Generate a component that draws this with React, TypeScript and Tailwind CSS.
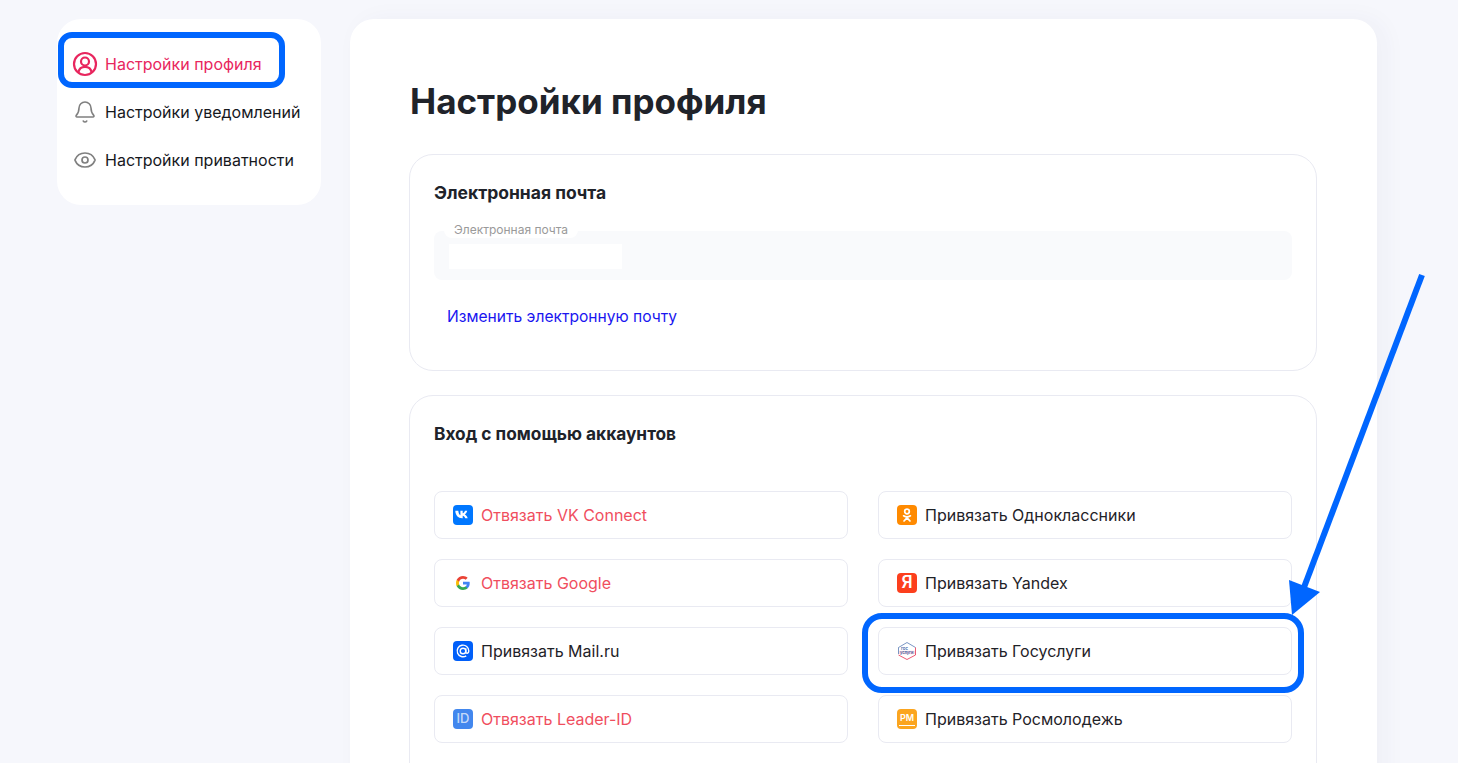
import { Bell, Eye } from 'lucide-react';
import type { ReactNode } from 'react';

const font = 'font-["Inter","Noto_Sans",sans-serif]';

function ProfileIcon() {
  return (
    <svg width="26" height="26" viewBox="0 0 26 26" fill="none" stroke="#e8265e" strokeWidth="2.2">
      <circle cx="13" cy="13" r="11" />
      <circle cx="13" cy="10.5" r="4" />
      <path d="M6.500 21c.6-3.400 3-5.200 6.500-5.200s5.900 1.800 6.500 5.200" />
    </svg>
  );
}

function VkIcon() {
  return (
    <svg width="20" height="20" viewBox="0 0 20 20">
      <rect width="20" height="20" rx="4" fill="#0077ff" />
      <path d="M2.800 5.800h2.500c.2 2.800 1.200 4.200 2.100 4.500V5.800h2.300v2.500c.9-.1 1.800-1.200 2.200-2.500h2.300c-.4 1.700-1.400 3-2.400 3.600 1 .5 2.300 1.600 2.900 3.800h-2.500c-.5-1.400-1.400-2.400-2.500-2.500v2.500h-.5c-4.200 0-6.700-2.800-6.900-7.400z" fill="#fff" />
    </svg>
  );
}

function GoogleIcon() {
  return (
    <svg width="20" height="20" viewBox="0 0 24 24">
      <g transform="translate(3.6 3.6) scale(0.7)">
        <path d="M23.500 12.300c0-.8-.1-1.600-.2-2.300H12v4.500h6.500c-.3 1.500-1.100 2.800-2.400 3.600v3h3.800c2.300-2.100 3.600-5.200 3.600-8.800z" fill="#4285f4" />
        <path d="M12 24c3.200 0 6-1.100 7.900-2.900l-3.800-3c-1.100.7-2.400 1.200-4.100 1.200-3.100 0-5.800-2.100-6.700-5H1.300v3.100C3.300 21.300 7.300 24 12 24z" fill="#34a853" />
        <path d="M5.300 14.300c-.5-1.500-.5-3.100 0-4.600V6.600H1.300c-1.700 3.300-1.700 7.400 0 10.800l4-3.100z" fill="#fbbc05" />
        <path d="M12 4.800c1.800 0 3.300.6 4.600 1.800l3.400-3.400C17.900 1.200 15.200 0 12 0 7.300 0 3.300 2.700 1.300 6.600l4 3.100c.9-2.800 3.600-4.900 6.700-4.900z" fill="#ea4335" />
      </g>
    </svg>
  );
}

function MailIcon() {
  return (
    <svg width="20" height="20" viewBox="0 0 20 20" fill="none">
      <rect width="20" height="20" rx="4" fill="#005ff9" />
      <circle cx="10" cy="10" r="2.8" stroke="#fff" strokeWidth="1.4" />
      <path d="M12.800 7.200v3.600c0 2.200 3 2 3-.8a5.800 5.800 0 1 0-2.600 4.800" stroke="#fff" strokeWidth="1.4" />
    </svg>
  );
}

function LeaderIcon() {
  return (
    <span className="flex h-5 w-5 items-center justify-center rounded bg-[#4287ee] text-[13px] font-medium text-white/70">ID</span>
  );
}

function OkIcon() {
  return (
    <svg width="20" height="20" viewBox="0 0 20 20" fill="none">
      <rect width="20" height="20" rx="4" fill="#ff8a00" />
      <circle cx="10" cy="6.5" r="2.3" stroke="#fff" strokeWidth="1.7" />
      <path d="M6.600 10.800c2.100 1.400 4.700 1.400 6.800 0M10 12v1M7 16l3-3.200 3 3.200" stroke="#fff" strokeWidth="1.7" strokeLinecap="round" />
    </svg>
  );
}

function YandexIcon() {
  return (
    <span className="flex h-5 w-5 items-center justify-center rounded bg-[#fc3f1d] text-[17px] font-semibold text-white">Я</span>
  );
}

function GosIcon() {
  return (
    <svg width="20" height="20" viewBox="0 0 20 20" fill="none">
      <path d="M1.500 13V6.500L10 1.500l8.500 5" stroke="#1e4f9c" strokeWidth="0.6" />
      <path d="M18.500 6.500V14L10 18.500 1.500 14" stroke="#e6304f" strokeWidth="0.8" />
      <rect x="2" y="9.8" width="16" height="3.4" fill="#fbdbe1" />
      <text x="4" y="8.6" fontSize="4.4" fontWeight="500" fill="#1e4f9c">гос</text>
      <text x="3" y="12.600" fontSize="4" fontWeight="500" fill="#1e4f9c">услуги</text>
    </svg>
  );
}

function RmIcon() {
  return (
    <span className="flex h-5 w-5 flex-col items-center justify-center rounded bg-[#fba51f] text-[9px] leading-[10px] font-semibold text-white">
      РМ
      <span className="mt-[2px] h-[1px] w-4 bg-white" />
    </span>
  );
}

function AccountButton({ icon, label, red }: { icon: ReactNode; label: string; red?: boolean }) {
  return (
    <div className="flex h-12 items-center gap-2 rounded-lg border border-[#e9eaf2] bg-white pl-[18px] text-base">
      <span className="flex h-5 w-5 shrink-0 items-center justify-center">{icon}</span>
      <span className={red ? 'text-[#f04e5e]' : 'text-[#1f2228]'}>{label}</span>
    </div>
  );
}

export default function App() {
  return (
    <div className={`${font} relative h-[763px] w-[1458px] overflow-hidden bg-[#f6f7fc] pl-[57px] pt-[19px]`}>
      <div className="flex items-start gap-[29px]">
        {/* sidebar */}
        <nav className="flex h-[186px] w-[264px] flex-col rounded-3xl bg-white pl-[15px] pt-[21px] text-base">
          <a className="flex h-12 items-center gap-[7px] text-[#e8265e]">
            <ProfileIcon />
            Настройки профиля
          </a>
          <a className="flex h-12 items-center gap-[8px] pl-[1px] text-[#16181d]">
            <Bell size={24} strokeWidth={1.6} className="text-[#808080]" />
            Настройки уведомлений
          </a>
          <a className="flex h-12 items-center gap-[8px] pl-[1px] text-[#16181d]">
            <Eye size={24} strokeWidth={1.7} className="text-[#808080]" />
            Настройки приватности
          </a>
        </nav>

        {/* main */}
        <main className="h-[800px] w-[1027px] rounded-t-3xl bg-white pl-[59px] pr-[60px] pt-[58px] shadow-[8px_0_24px_rgba(40,50,90,0.04)]">
          <h1 className="pl-px text-[35px] leading-[48px] font-bold text-[#20232a]">Настройки профиля</h1>

          <section className="mt-[29px] h-[217px] rounded-3xl border border-[#e9eaf2] px-6 pt-[26px]">
            <h2 className="text-[17.5px] leading-6 font-bold text-[#20232a]">Электронная почта</h2>
            <div className="relative mt-[26px] h-[49px] rounded-lg bg-[#f9fafc]">
              <span className="absolute -top-[9px] left-2.5 rounded-full bg-white px-2.5 text-[12px] leading-4 text-[#9a9a9a]">Электронная почта</span>
              <div className="absolute left-[15px] top-[13px] h-[25px] w-[173px] bg-white" />
            </div>
            <a className="mt-[25px] block pl-[13px] text-[15.6px] leading-6 text-[#1a16f0]">Изменить электронную почту</a>
          </section>

          <section className="mt-6 h-[500px] rounded-3xl border border-[#e9eaf2] px-6 pt-[26px]">
            <h2 className="text-[17.3px] leading-6 font-bold text-[#20232a]">Вход с помощью аккаунтов</h2>
            <div className="mt-[45px] grid grid-cols-2 gap-x-[30px] gap-y-5">
              <AccountButton icon={<VkIcon />} label="Отвязать VK Connect" red />
              <AccountButton icon={<OkIcon />} label="Привязать Одноклассники" />
              <AccountButton icon={<GoogleIcon />} label="Отвязать Google" red />
              <AccountButton icon={<YandexIcon />} label="Привязать Yandex" />
              <AccountButton icon={<MailIcon />} label="Привязать Mail.ru" />
              <AccountButton icon={<GosIcon />} label="Привязать Госуслуги" />
              <AccountButton icon={<LeaderIcon />} label="Отвязать Leader-ID" red />
              <AccountButton icon={<RmIcon />} label="Привязать Росмолодежь" />
            </div>
          </section>
        </main>
      </div>

      {/* annotations drawn over the page */}
      <div className="absolute left-[58px] top-[32px] h-[56px] w-[227px] rounded-[14px] border-[6px] border-[#0066ff]" />
      <div className="absolute left-[862px] top-[613px] h-[80px] w-[442px] rounded-[20px] border-[6px] border-[#0066ff]" />
      <svg className="absolute left-0 top-0" width="1458" height="763" fill="none">
        <path d="M1422 275 1303 590" stroke="#0066ff" strokeWidth="6" />
        <path d="M1289 580 1320 592 1292 615z" fill="#0066ff" />
      </svg>
    </div>
  );
}
